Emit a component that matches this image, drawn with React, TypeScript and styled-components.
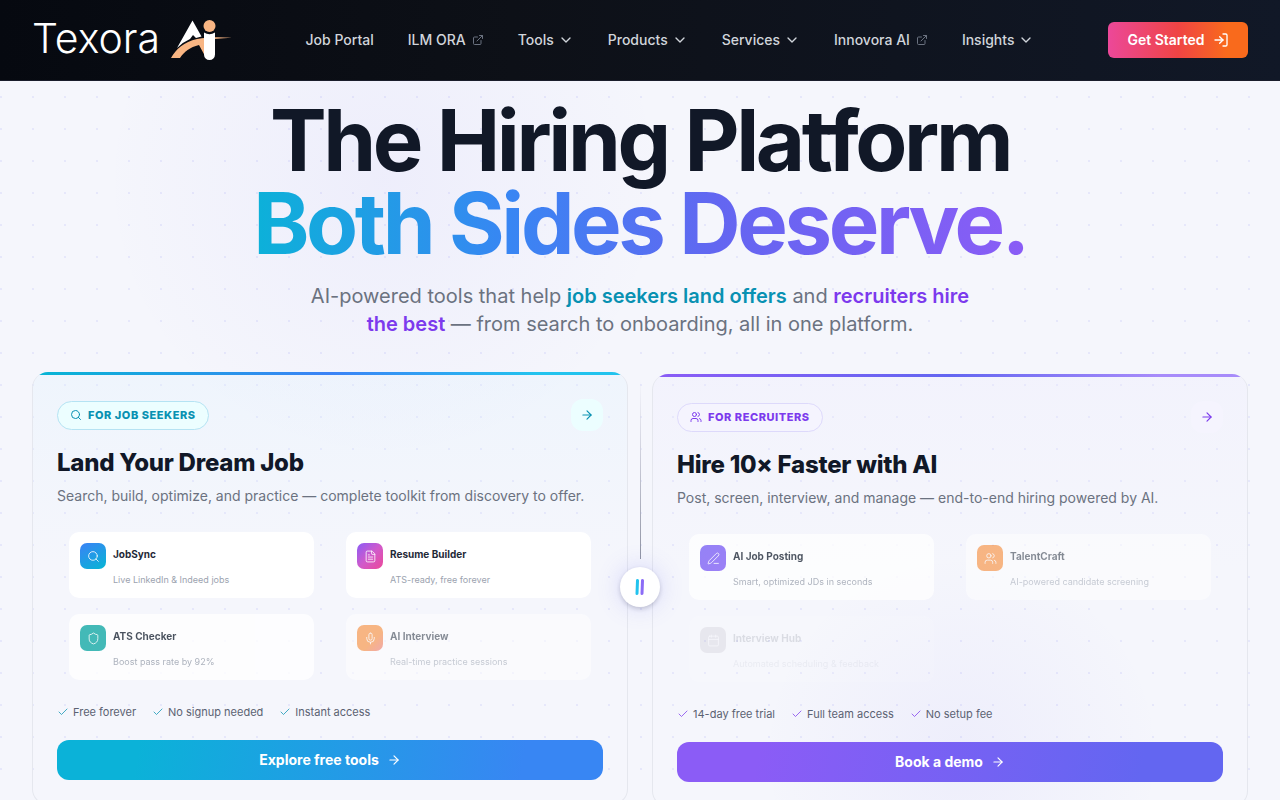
import React from 'react';
import styled, { createGlobalStyle } from 'styled-components';
import {
  ArrowRight, Calendar, Check, ChevronDown, ExternalLink, FileText, LogIn, Mic, PenLine, Search, Shield, Users,
} from 'lucide-react';
import type { LucideIcon } from 'lucide-react';

const GlobalStyle = createGlobalStyle`
  *, *::before, *::after { box-sizing: border-box; }
  body {
    margin: 0;
    font-family: Inter, "Liberation Sans", sans-serif;
    color: #111827;
    background: #f5f6fc;
  }
  h1, h2, h3, p, ul { margin: 0; padding: 0; }
  ul { list-style: none; }
  a { color: inherit; text-decoration: none; }
  button { font: inherit; border: 0; cursor: pointer; }
`;

const Page = styled.div`
  min-height: 100vh;
  overflow: hidden;
  background:
    radial-gradient(circle at 1px 1px, rgba(99, 102, 241, 0.1) 1px, transparent 1px) 0 0 / 32px 32px,
    radial-gradient(circle at 30% 180px, rgba(99, 82, 241, 0.05), transparent 280px),
    #f5f6fc;
`;

const Header = styled.header`
  display: flex;
  align-items: center;
  justify-content: space-between;
  height: 81px;
  padding: 0 32px;
  border-bottom: 1px solid #1a1d2b;
  background: linear-gradient(90deg, #060910, #0d1017 40%, #111827);
`;

const Brand = styled.a`
  display: flex;
  align-items: center;
  height: 80px;
`;

const Nav = styled.nav`
  display: flex;
  align-items: center;
  gap: 34px;
  font-size: 14px;
  line-height: 20px;
  font-weight: 500;
  color: #d1d5db;
`;

const NavLink = styled.a`
  display: flex;
  align-items: center;
  gap: 6px;
  svg { color: #6b7280; }
`;

const NavMenu = styled.button`
  display: flex;
  align-items: center;
  gap: 4px;
  padding: 0;
  color: inherit;
  background: none;
`;

const StartButton = styled.button`
  display: flex;
  align-items: center;
  justify-content: center;
  gap: 8px;
  width: 140px;
  height: 36px;
  border-radius: 6px;
  font-size: 14px;
  line-height: 20px;
  font-weight: 600;
  color: #fff;
  background: linear-gradient(90deg, #ec4899, #ef4444 50%, #f96a1c 85%);
`;

const Hero = styled.section`
  display: flex;
  flex-direction: column;
  align-items: center;
  padding: 18px 32px 0;
  text-align: center;
`;

const Headline = styled.h1`
  font-size: 85px;
  line-height: 83px;
  font-weight: 700;
  letter-spacing: -0.04em;
`;

const GradientLine = styled.span`
  display: table;
  margin: 0 auto -8px;
  padding: 0 4px 8px;
  color: transparent;
  background: linear-gradient(90deg, #0bb2d8, #3886f3 33%, #6366f1 60%, #8b5cf6);
  background-clip: text;
  -webkit-background-clip: text;
`;

const Lead = styled.p`
  max-width: 672px;
  margin-top: 17px;
  font-size: 20px;
  line-height: 28px;
  color: #6b7280;
`;

const Accent = styled.strong<{ $color: string }>`
  font-weight: 600;
  color: ${(p) => p.$color};
`;

const Split = styled.section`
  position: relative;
  display: grid;
  grid-template-columns: 1fr 1fr;
  align-items: start;
  gap: 24px;
  padding: 34px 32px 32px;
`;

const Panel = styled.article<{ $tint: string; $bar: string; $drop?: boolean }>`
  margin-top: ${(p) => (p.$drop ? '2px' : '0')};
  border: 1px solid #e5e7ee;
  border-top: 0;
  border-radius: 16px;
  overflow: hidden;
  background: ${(p) => p.$tint};
  &::before {
    content: '';
    display: block;
    height: 3px;
    background: ${(p) => p.$bar};
  }
`;

const PanelBody = styled.div`
  padding: 24px;
`;

const PanelTop = styled.div`
  display: flex;
  align-items: center;
  justify-content: space-between;
`;

const Pill = styled.span<{ $color: string; $bg: string; $line: string }>`
  display: flex;
  align-items: center;
  gap: 6px;
  height: 29px;
  padding: 0 12px;
  border: 1px solid ${(p) => p.$line};
  border-radius: 15px;
  font-size: 11px;
  font-weight: 800;
  letter-spacing: 0.05em;
  text-transform: uppercase;
  color: ${(p) => p.$color};
  background: ${(p) => p.$bg};
`;

const RoundLink = styled.a<{ $color: string; $bg: string }>`
  display: grid;
  place-items: center;
  width: 32px;
  height: 32px;
  border-radius: 12px;
  color: ${(p) => p.$color};
  background: ${(p) => p.$bg};
`;

const PanelTitle = styled.h2`
  margin-top: 16px;
  font-size: 24px;
  line-height: 32px;
  font-weight: 800;
  letter-spacing: -0.01em;
`;

const PanelText = styled.p`
  margin-top: 5px;
  font-size: 14px;
  line-height: 24px;
  color: #6b7280;
`;

const ToolGrid = styled.ul`
  display: grid;
  grid-template-columns: 1fr 1fr;
  gap: 16px 32px;
  padding: 0 12px;
  margin-top: 24px;
`;

const Tool = styled.li<{ $fade: number }>`
  display: grid;
  grid-template-columns: 26px 1fr;
  column-gap: 7px;
  align-content: start;
  height: 66px;
  padding: 11px;
  border-radius: 10px;
  background: #fff;
  opacity: ${(p) => p.$fade};
`;

const ToolIcon = styled.span<{ $bg: string }>`
  display: grid;
  place-items: center;
  width: 26px;
  height: 26px;
  border-radius: 7px;
  color: #fff;
  background: ${(p) => p.$bg};
`;

const ToolName = styled.h3`
  font-size: 10px;
  line-height: 22px;
  font-weight: 700;
  color: #1f2937;
`;

const ToolText = styled.p`
  grid-column: 2;
  margin-top: 3px;
  font-size: 9px;
  line-height: 16px;
  color: #9ca3af;
`;

const Perks = styled.ul<{ $color: string }>`
  display: flex;
  gap: 16px;
  margin-top: 24px;
  font-size: 11px;
  line-height: 16px;
  font-weight: 400;
  color: #5b6272;
  svg { color: ${(p) => p.$color}; }
`;

const Perk = styled.li`
  display: flex;
  align-items: center;
  gap: 4px;
`;

const Action = styled.button<{ $bg: string }>`
  display: flex;
  align-items: center;
  justify-content: center;
  gap: 8px;
  width: 100%;
  height: 40px;
  margin-top: 20px;
  border-radius: 12px;
  font-size: 14px;
  line-height: 20px;
  font-weight: 700;
  color: #fff;
  background: ${(p) => p.$bg};
`;

const Divider = styled.div`
  position: absolute;
  top: 42px;
  left: 50%;
  display: flex;
  flex-direction: column;
  align-items: center;
  width: 40px;
  margin-left: -20px;
`;

const DividerLine = styled.span`
  width: 1px;
  height: 179px;
  margin-left: 1px;
  background: linear-gradient(180deg, transparent, #d5d6e2 35%, #8f93a3);
`;

const DividerKnob = styled.span`
  display: grid;
  place-items: center;
  width: 40px;
  height: 40px;
  margin-top: 8px;
  border-radius: 50%;
  background: #fff;
  box-shadow: 0 2px 4px rgba(17, 24, 39, 0.18), 0 0 24px rgba(99, 102, 241, 0.22);
`;

const Logo = () => (
  <svg width="200" height="64" viewBox="32 8 200 64" role="img" aria-label="Texora Ai">
    <text x="32" y="53" fontFamily="Inter, sans-serif" fontSize="41" fontWeight="300" fill="#fff">Texora</text>
    <path d="M192.5 20.5 L201.5 36.5 L196 38 L193 35 L190 39 Q183 42 177 48 Z" fill="#fff" />
    <path d="M171 58 C176 49 184 42 197 39 C207 37 219 37 232 37.800 C220 38.500 213 39 205 40 L205 56 L199 45 C190 47 184 52 180 58 Z" fill="#f8b583" />
    <path d="M204 32.500 Q209.500 36 215 32.500 V54.500 A5.500 5.500 0 0 1 204 54.500 Z" fill="#fff" />
    <circle cx="209.500" cy="26" r="6" fill="#f8b583" />
  </svg>
);

type ToolItem = { name: string; text: string; icon: LucideIcon; bg: string; fade: number };
type PanelData = {
  pill: string; pillIcon: LucideIcon; color: string; soft: string; line: string;
  title: string; text: string; tools: ToolItem[]; perks: string[];
  action: string; actionBg: string; bar: string; tint: string; drop?: boolean;
};

const seekers: PanelData = {
  pill: 'For Job Seekers', pillIcon: Search, color: '#0891b2', soft: '#ecfeff', line: '#b5e3f3',
  title: 'Land Your Dream Job',
  text: 'Search, build, optimize, and practice — complete toolkit from discovery to offer.',
  tools: [
    { name: 'JobSync', text: 'Live LinkedIn & Indeed jobs', icon: Search, bg: 'linear-gradient(150deg, #3b82f6, #06b6d4)', fade: 1 },
    { name: 'Resume Builder', text: 'ATS-ready, free forever', icon: FileText, bg: 'linear-gradient(135deg, #8b5cf6, #d05acb 50%, #ec4899)', fade: 1 },
    { name: 'ATS Checker', text: 'Boost pass rate by 92%', icon: Shield, bg: '#17aba6', fade: 0.8 },
    { name: 'AI Interview', text: 'Real-time practice sessions', icon: Mic, bg: 'linear-gradient(135deg, #f97a16 60%, #ee6560)', fade: 0.52 },
  ],
  perks: ['Free forever', 'No signup needed', 'Instant access'],
  action: 'Explore free tools', actionBg: 'linear-gradient(100deg, #0bb2d8 15%, #3886f3 85%)',
  bar: 'linear-gradient(90deg, #06b6d4, #3b82f6 50%, #22c3ee 85%)',
  tint: 'linear-gradient(180deg, rgba(224, 242, 254, 0.3), rgba(245, 246, 252, 0) 45%)',
};

const recruiters: PanelData = {
  pill: 'For Recruiters', pillIcon: Users, color: '#7c3aed', soft: '#f5f4fe', line: '#ddd9fb',
  title: 'Hire 10× Faster with AI',
  text: 'Post, screen, interview, and manage — end-to-end hiring powered by AI.',
  tools: [
    { name: 'AI Job Posting', text: 'Smart, optimized JDs in seconds', icon: PenLine, bg: 'linear-gradient(135deg, #7a62f5, #8360f5)', fade: 0.78 },
    { name: 'TalentCraft', text: 'AI-powered candidate screening', icon: Users, bg: '#f97a16', fade: 0.52 },
    { name: 'Interview Hub', text: 'Automated scheduling & feedback', icon: Calendar, bg: '#8b7f8c', fade: 0.12 },
  ],
  perks: ['14-day free trial', 'Full team access', 'No setup fee'],
  action: 'Book a demo', actionBg: 'linear-gradient(100deg, #8b5cf6 15%, #6366f1 85%)',
  bar: 'linear-gradient(90deg, #8b5cf6, #6366f1 50%, #a78bfa 85%)',
  tint: 'radial-gradient(circle at 52% 88%, rgba(99, 82, 241, 0.05), transparent 200px), linear-gradient(180deg, rgba(237, 235, 254, 0.3), rgba(245, 246, 252, 0) 45%)',
  drop: true,
};

const AudiencePanel = ({ data }: { data: PanelData }) => {
  const PillIcon = data.pillIcon;
  return (
    <Panel $tint={data.tint} $bar={data.bar} $drop={data.drop}>
      <PanelBody>
        <PanelTop>
          <Pill $color={data.color} $bg={data.soft} $line={data.line}>
            <PillIcon size={12} />
            {data.pill}
          </Pill>
          <RoundLink href="#" aria-label={data.action} $color={data.color} $bg={data.soft}>
            <ArrowRight size={14} />
          </RoundLink>
        </PanelTop>
        <PanelTitle>{data.title}</PanelTitle>
        <PanelText>{data.text}</PanelText>
        <ToolGrid>
          {data.tools.map(({ name, text, icon: Icon, bg, fade }) => (
            <Tool key={name} $fade={fade}>
              <ToolIcon $bg={bg}><Icon size={13} strokeWidth={1.5} /></ToolIcon>
              <ToolName>{name}</ToolName>
              <ToolText>{text}</ToolText>
            </Tool>
          ))}
        </ToolGrid>
        <Perks $color={data.color}>
          {data.perks.map((perk) => (
            <Perk key={perk}><Check size={12} strokeWidth={1.5} />{perk}</Perk>
          ))}
        </Perks>
        <Action $bg={data.actionBg}>{data.action}<ArrowRight size={14} /></Action>
      </PanelBody>
    </Panel>
  );
};

const Menu = ({ label }: { label: string }) => (
  <NavMenu>{label}<ChevronDown size={16} /></NavMenu>
);

export default function App() {
  return (
    <Page>
      <GlobalStyle />
      <Header>
        <Brand href="#"><Logo /></Brand>
        <Nav>
          <NavLink href="#">Job Portal</NavLink>
          <NavLink href="#">ILM ORA<ExternalLink size={12} /></NavLink>
          <Menu label="Tools" />
          <Menu label="Products" />
          <Menu label="Services" />
          <NavLink href="#">Innovora AI<ExternalLink size={12} /></NavLink>
          <Menu label="Insights" />
        </Nav>
        <StartButton>Get Started<LogIn size={16} /></StartButton>
      </Header>
      <main>
        <Hero>
          <Headline>
            The Hiring Platform
            <GradientLine>Both Sides Deserve.</GradientLine>
          </Headline>
          <Lead>
            AI-powered tools that help <Accent $color="#0891b2">job seekers land offers</Accent> and{' '}
            <Accent $color="#7c3aed">recruiters hire the best</Accent> — from search to onboarding, all in one platform.
          </Lead>
        </Hero>
        <Split>
          <AudiencePanel data={seekers} />
          <AudiencePanel data={recruiters} />
          <Divider>
            <DividerLine />
            <DividerKnob>
              <svg width="16" height="20" viewBox="0 0 16 20" aria-hidden="true">
                <path d="M5.500 3.500 L5 16.500" stroke="#22c3ee" strokeWidth="3" strokeLinecap="round" />
                <path d="M10.500 3.500 L10 16.500" stroke="#8b6cf6" strokeWidth="3" strokeLinecap="round" />
              </svg>
            </DividerKnob>
          </Divider>
        </Split>
      </main>
    </Page>
  );
}
